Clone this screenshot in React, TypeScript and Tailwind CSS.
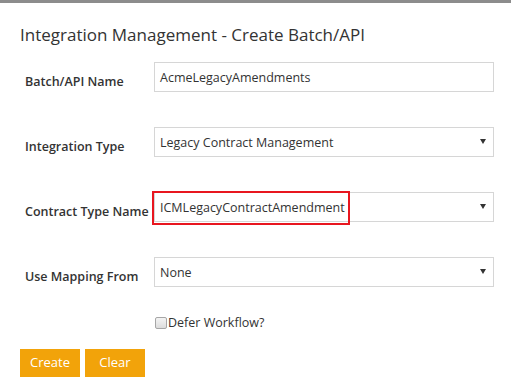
import React from 'react';

const font = { fontFamily: '"Open Sans", "Noto Sans", sans-serif' };

const Arrow = () => (
  <svg width="6" height="5" viewBox="0 0 6 5" className="absolute right-[7px] top-[11px]">
    <path d="M0 0 H6 L3 5 Z" fill="#333" />
  </svg>
);

const Field = ({ label, value, select, highlight }: { label: string; value: string; select?: boolean; highlight?: boolean }) => (
  <div className="flex items-start h-[30px]">
    <div className="w-[134px] pl-[5px] pt-[10px] text-[12.5px] font-semibold text-[#333] leading-[20px]">{label}</div>
    <div className="relative w-[340px] h-[30px] border border-[#d6d6d6] bg-white">
      <span className="absolute left-[5px] top-[6px] text-[12.5px] leading-[18px] text-[#333]">{value}</span>
      {highlight && (
        <div className="absolute left-[-3px] top-[-2px] w-[198px] h-[34px] border-2 border-[#e8161f]" />
      )}
      {select && <Arrow />}
    </div>
  </div>
);

export default function App() {
  return (
    <div className="w-[511px] h-[388px] bg-white border-t-[3px] border-[#8c8c8c] overflow-hidden" style={font}>
      <div className="pl-[20px] pt-[20px] text-[17px] leading-[24px] text-[#333]">
        Integration Management - Create Batch/API
      </div>
      <div className="flex flex-col gap-[35px] pt-[15px] pl-[20px]">
        <Field label="Batch/API Name" value="AcmeLegacyAmendments" />
        <Field label="Integration Type" value="Legacy Contract Management" select />
        <Field label="Contract Type Name" value="ICMLegacyContractAmendment" select highlight />
        <Field label="Use Mapping From" value="None" select />
      </div>
      <div className="flex items-center pl-[155px] pt-[28px]">
        <div className="w-[12px] h-[12px] rounded-[2px] border border-[#a6a6a6] bg-gradient-to-b from-[#f4f4f4] to-[#dcdcdc]" />
        <span className="pl-[1px] text-[12.5px] leading-[16px] text-[#333]">Defer Workflow?</span>
      </div>
      <div className="flex gap-[5px] pl-[20px] pt-[18px]">
        <button className="w-[60px] h-[28px] bg-[#f2a30a] text-white text-[13px]">Create</button>
        <button className="w-[60px] h-[28px] bg-[#f2a30a] text-white text-[13px]">Clear</button>
      </div>
    </div>
  );
}
